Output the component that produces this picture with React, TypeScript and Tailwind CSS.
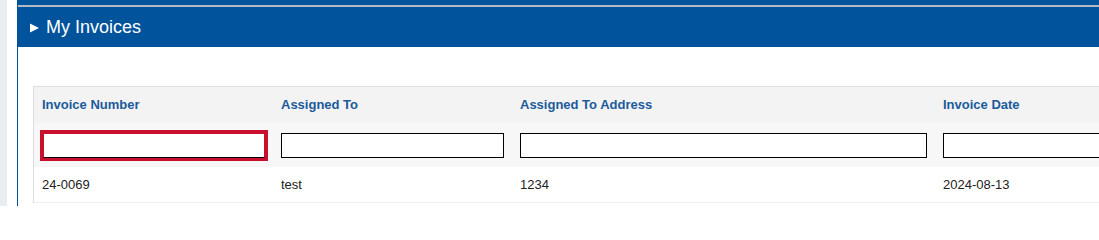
const columns = [
  { title: "Invoice Number", width: "w-[239px]", value: "24-0069", focused: true },
  { title: "Assigned To", width: "w-[239px]", value: "test", focused: false },
  { title: "Assigned To Address", width: "w-[423px]", value: "1234", focused: false },
  { title: "Invoice Date", width: "w-[239px]", value: "2024-08-13", focused: false },
];

export default function App() {
  return (
    <div className="flex h-[206px] overflow-hidden bg-white font-['Liberation_Sans',Arial,sans-serif]">
      <div className="w-[7px] shrink-0 bg-[#e9edf2]" />
      <div className="w-[10px] shrink-0" />
      <div className="flex min-w-0 flex-1 flex-col border-l border-[#01539b]">
        {/* top bar */}
        <div className="h-[5px] bg-[#01539b]" />
        <div className="h-[2px] bg-[#b1bac6]" />
        <div className="flex h-[40px] items-center gap-[7px] bg-[#01539b] pl-[12px] text-white">
          <svg width="9" height="10" viewBox="0 0 9 10" className="mt-[1px]">
            <path d="M0 0.5 L9 5 L0 9.5 Z" fill="white" />
          </svg>
          <span className="text-[18px] leading-none">My Invoices</span>
        </div>

        {/* table */}
        <div className="overflow-hidden pl-[15px] pt-[39px]">
          <div className="w-max border-t border-l border-[#dddddd]">
            <div className="flex h-[36px] bg-[#f3f3f3]">
              {columns.map((c) => (
                <div
                  key={c.title}
                  className={`${c.width} flex items-center px-[8px] text-[13px] font-bold text-[#1b5b9b]`}
                >
                  {c.title}
                </div>
              ))}
            </div>
            <div className="flex h-[44px] bg-[#f7f7f7]">
              {columns.map((c) => (
                <div key={c.title} className={`${c.width} px-[8px] pt-[10px]`}>
                  {c.focused ? (
                    <input className="ml-[1px] h-[25px] w-[calc(100%-1px)] border border-[#c8102e] border-b-black bg-white shadow-[0_0_0_3px_#c8102e] outline-none" />
                  ) : (
                    <input className="h-[25px] w-full border border-black bg-white" />
                  )}
                </div>
              ))}
            </div>
            <div className="flex h-[36px] border-b border-[#eeeeee] bg-white">
              {columns.map((c) => (
                <div
                  key={c.title}
                  className={`${c.width} flex items-center px-[8px] text-[13px] text-[#222222]`}
                >
                  {c.value}
                </div>
              ))}
            </div>
          </div>
        </div>
      </div>
    </div>
  );
}
